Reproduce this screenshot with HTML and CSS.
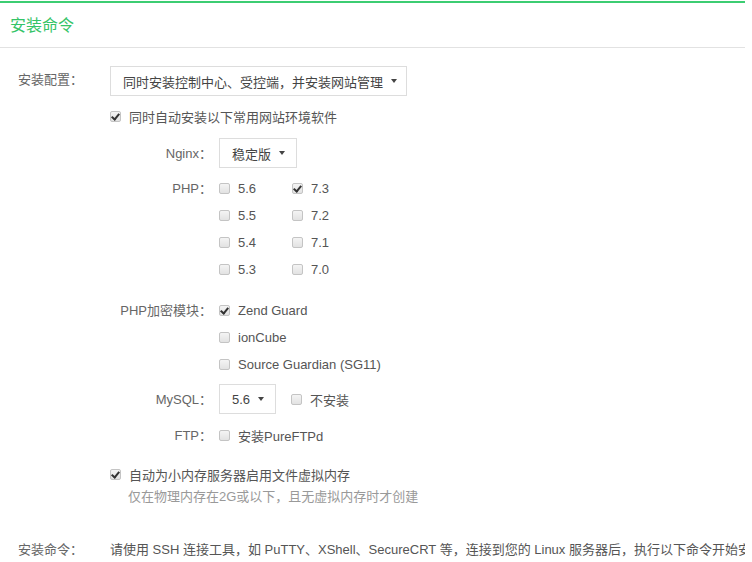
FILE: index.html
```html
<!DOCTYPE html>
<html lang="zh-CN">
<head>
  <meta charset="UTF-8"/>
  <title>安装命令</title>
  <link rel="stylesheet" href="styles.css">
</head>
<body>
  <div class="panel">
    <div class="panel-head">安装命令</div>

    <div class="panel-body">
      <div class="row first">
        <div class="row-label">安装配置：</div>
        <div class="select wide">同时安装控制中心、受控端，并安装网站管理 <i class="caret"></i></div>
      </div>

      <div class="indent check-line">
        <span class="cb checked"></span>同时自动安装以下常用网站环境软件
      </div>

      <div class="sub-row nginx">
        <div class="sub-label">Nginx：</div>
        <div class="select">稳定版 <i class="caret"></i></div>
      </div>

      <div class="sub-row php">
        <div class="sub-label">PHP：</div>
        <div class="php-grid">
          <label><span class="cb"></span>5.6</label>
          <label><span class="cb checked"></span>7.3</label>
          <label><span class="cb"></span>5.5</label>
          <label><span class="cb"></span>7.2</label>
          <label><span class="cb"></span>5.4</label>
          <label><span class="cb"></span>7.1</label>
          <label><span class="cb"></span>5.3</label>
          <label><span class="cb"></span>7.0</label>
        </div>
      </div>

      <div class="sub-row encrypt">
        <div class="sub-label">PHP加密模块：</div>
        <div class="opt-list">
          <label><span class="cb checked"></span>Zend Guard</label>
          <label><span class="cb"></span>ionCube</label>
          <label><span class="cb"></span>Source Guardian (SG11)</label>
        </div>
      </div>

      <div class="sub-row mysql">
        <div class="sub-label">MySQL：</div>
        <div class="select">5.6 <i class="caret"></i></div>
        <label class="inline-opt"><span class="cb"></span>不安装</label>
      </div>

      <div class="sub-row ftp">
        <div class="sub-label">FTP：</div>
        <label><span class="cb"></span>安装PureFTPd</label>
      </div>

      <div class="indent check-line swap">
        <span class="cb checked"></span>自动为小内存服务器启用文件虚拟内存
      </div>
      <div class="indent hint">仅在物理内存在2G或以下，且无虚拟内存时才创建</div>

      <div class="row cmd">
        <div class="row-label">安装命令：</div>
        <div class="cmd-text">请使用 SSH 连接工具，如 PuTTY、XShell、SecureCRT 等，连接到您的 Linux 服务器后，执行以下命令开始安装</div>
      </div>
    </div>
  </div>
</body>
</html>
```

FILE: styles.css
```css
* {
  box-sizing: border-box;
}

body {
  margin: 0;
  background: #fff;
  font-family: "Liberation Sans", "Noto Sans CJK SC", sans-serif;
  font-size: 13px;
  color: #555;
}

.panel {
  width: 745px;
  margin-top: 1px;
  border-top: 2px solid #3ccd72;
  overflow: hidden;
}

.panel-head {
  height: 45px;
  line-height: 46px;
  padding-left: 10px;
  font-size: 16px;
  color: #35c468;
  border-bottom: 1px solid #e2e2e2;
}

.panel-body {
  padding: 18px 0 0 18px;
}

.row {
  display: flex;
  align-items: center;
}

.row-label {
  width: 92px;
  color: #666;
  flex-shrink: 0;
}

.first .row-label {
  margin-top: -6px;
}

.select {
  display: inline-flex;
  align-items: center;
  height: 30px;
  padding: 0 11px 0 12px;
  border: 1px solid #ddd;
  background: #fff;
  color: #444;
  white-space: nowrap;
}

.select.wide {
  width: 297px;
  overflow: hidden;
}

.caret {
  display: inline-block;
  width: 0;
  height: 0;
  margin-left: 8px;
  border-left: 3.5px solid transparent;
  border-right: 3.5px solid transparent;
  border-top: 4px solid #444;
}

.indent {
  padding-left: 92px;
}

.check-line {
  display: flex;
  align-items: center;
  height: 27px;
  color: #555;
}

.row.first + .check-line {
  margin-top: 7px;
}

.cb {
  display: inline-block;
  position: relative;
  width: 11px;
  height: 11px;
  margin-right: 8px;
  border: 1px solid #c4c4c4;
  border-radius: 2px;
  background: linear-gradient(#f4f4f4, #e2e2e2);
  flex-shrink: 0;
}

.cb.checked::after {
  content: "";
  position: absolute;
  left: 2px;
  top: 0px;
  width: 3px;
  height: 6px;
  border-right: 2px solid #333;
  border-bottom: 2px solid #333;
  transform: rotate(40deg);
}

.sub-row {
  display: flex;
  align-items: flex-start;
  padding-left: 92px;
}

.sub-row label {
  display: flex;
  align-items: center;
  height: 27px;
}

.sub-label {
  width: 102px;
  text-align: right;
  color: #666;
  line-height: 27px;
  flex-shrink: 0;
  margin-right: 7px;
}

.nginx {
  margin-top: 8px;
  align-items: center;
}

.php {
  margin-top: 7px;
}

.php-grid {
  display: grid;
  grid-template-columns: 73px 73px;
}

.encrypt {
  margin-top: 14px;
}

.opt-list {
  display: flex;
  flex-direction: column;
}

.mysql {
  margin-top: 6px;
  align-items: center;
}

.inline-opt {
  margin-left: 15px;
}

.ftp {
  margin-top: 8px;
}

.swap {
  margin-top: 12px;
}

.hint {
  padding-left: 110px;
  line-height: 18px;
  color: #999;
}

.cmd {
  margin-top: 29px;
  height: 27px;
}

.cmd-text {
  white-space: nowrap;
  color: #555;
}
```
